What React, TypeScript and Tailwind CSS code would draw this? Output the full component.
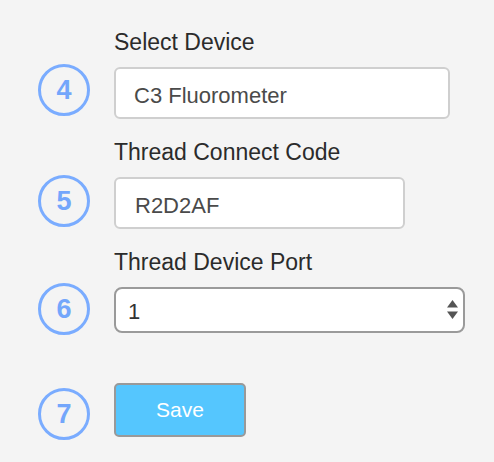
import { type ReactNode } from "react";

function StepCircle({ n, className = "" }: { n: number; className?: string }) {
  return (
    <div
      className={`flex h-[52px] w-[52px] shrink-0 items-center justify-center rounded-full border-[3px] border-[#7aacff] text-[27px] font-bold leading-none text-[#73a6fb] ${className}`}
    >
      {n}
    </div>
  );
}

function Label({ children }: { children: ReactNode }) {
  return <label className="ml-[76px] block text-[23px] leading-[28px] text-[#2b2b2b]">{children}</label>;
}

export default function App() {
  return (
    <div className="min-h-screen bg-[#f4f4f4] pl-[38px] pt-[28px] font-['Liberation_Sans',Arial,sans-serif]">
      {/* Step 4 */}
      <div>
        <Label>Select Device</Label>
        <div className="mt-[11px] flex items-start gap-[24px]">
          <StepCircle n={4} className="-mt-[3px]" />
          <input
            readOnly
            value="C3 Fluorometer"
            className="h-[52px] w-[336px] rounded-[6px] border-2 border-[#cfcfcf] bg-white px-[18px] pt-[5px] text-[22px] text-[#4a4a4a] outline-none"
          />
        </div>
      </div>

      {/* Step 5 */}
      <div className="mt-[19px]">
        <Label>Thread Connect Code</Label>
        <div className="mt-[11px] flex items-start gap-[24px]">
          <StepCircle n={5} className="-mt-[2px]" />
          <input
            readOnly
            value="R2D2AF"
            className="h-[52px] w-[291px] rounded-[6px] border-2 border-[#cfcfcf] bg-white px-[19px] pt-[5px] text-[22px] text-[#4a4a4a] outline-none"
          />
        </div>
      </div>

      {/* Step 6 */}
      <div className="mt-[19px]">
        <Label>Thread Device Port</Label>
        <div className="mt-[11px] flex items-start gap-[24px]">
          <StepCircle n={6} className="-mt-[4px]" />
          <div className="relative">
            <select
              defaultValue="1"
              className="h-[46px] w-[351px] appearance-none rounded-[8px] border-2 border-[#9a9a9a] bg-white pl-[12px] pt-[3px] text-[22px] text-[#333] outline-none"
            >
              <option value="1">1</option>
              <option value="2">2</option>
              <option value="3">3</option>
            </select>
            <svg
              className="pointer-events-none absolute right-[7px] top-[13px]"
              width="11"
              height="19"
              viewBox="0 0 11 19"
            >
              <path d="M5.5 0 L11 7.5 L0 7.5 Z" fill="#555" />
              <path d="M0 11.5 L11 11.5 L5.5 19 Z" fill="#555" />
            </svg>
          </div>
        </div>
      </div>

      {/* Step 7 */}
      <div className="mt-[48px] flex items-start gap-[24px]">
        <StepCircle n={7} className="mt-[5px]" />
        <button
          type="button"
          className="h-[54px] w-[132px] rounded-[5px] border-2 border-[#999] bg-[#55c6fe] text-[21px] text-white"
        >
          Save
        </button>
      </div>
    </div>
  );
}
